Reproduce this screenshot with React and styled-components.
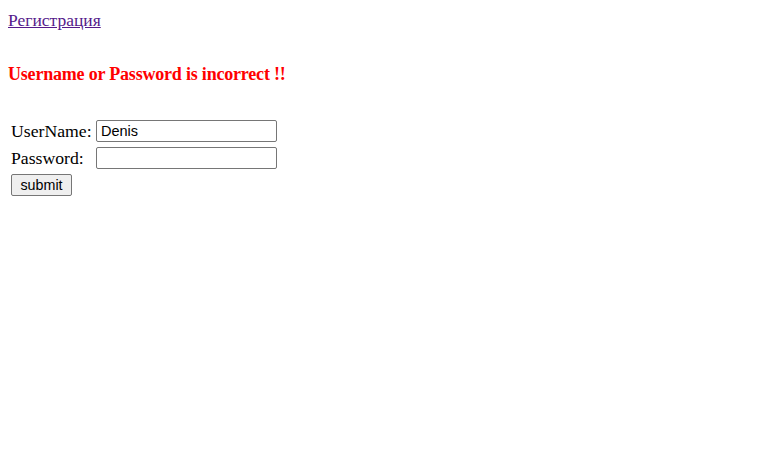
import React from "react";
import styled, { createGlobalStyle } from "styled-components";

const Global = createGlobalStyle`
  html, body { margin: 0; padding: 0; background: #fff; }
  body { font-family: "Liberation Serif", "Times New Roman", serif; font-size: 16px; color: #000; }
`;

const Page = styled.div`
  padding: 8px;
  display: flex;
  flex-direction: column;
  align-items: flex-start;
`;

const RegLink = styled.a`
  display: block;
  margin-top: 2px;
  line-height: 20px;
  color: #551a8b;
  text-decoration: underline;
  font-size: 17.5px;
`;

const ErrorTitle = styled.h3`
  margin: 33px 0 0;
  font-size: 18px;
  line-height: 22px;
  font-weight: bold;
  letter-spacing: -0.2px;
  color: #ff0000;
`;

const Form = styled.form`
  margin-top: 34px;
  display: grid;
  grid-template-columns: 81px 181px;
  grid-auto-rows: 23px;
  column-gap: 4px;
  row-gap: 4px;
  padding-left: 3px;
  align-items: center;
`;

const Label = styled.label`
  font-size: 17.7px;
  line-height: 20px;
  white-space: nowrap;
  padding-top: 1px;
`;

const Input = styled.input`
  box-sizing: border-box;
  width: 181px;
  height: 22px;
  margin: 0;
  padding: 1px 4px;
  border: 1px solid #767676;
  border-radius: 2px;
  font-family: "Liberation Sans", Arial, sans-serif;
  font-size: 14.5px;
  color: #000;
  background: #fff;
`;

const Submit = styled.button`
  box-sizing: border-box;
  grid-column: 1 / span 2;
  justify-self: start;
  width: 61px;
  height: 22px;
  margin: 0;
  padding: 1px 6px;
  border: 1px solid #767676;
  border-radius: 2px;
  background: #efefef;
  font-family: "Liberation Sans", Arial, sans-serif;
  font-size: 14.3px;
  color: #000;
`;

export default function App() {
  return (
    <>
      <Global />
      <Page>
        <RegLink href="#">Регистрация</RegLink>
        <ErrorTitle>Username or Password is incorrect !!</ErrorTitle>
        <Form onSubmit={(e) => e.preventDefault()}>
          <Label htmlFor="user">UserName:</Label>
          <Input id="user" type="text" defaultValue="Denis" />
          <Label htmlFor="pass">Password:</Label>
          <Input id="pass" type="password" />
          <Submit type="submit">submit</Submit>
        </Form>
      </Page>
    </>
  );
}
